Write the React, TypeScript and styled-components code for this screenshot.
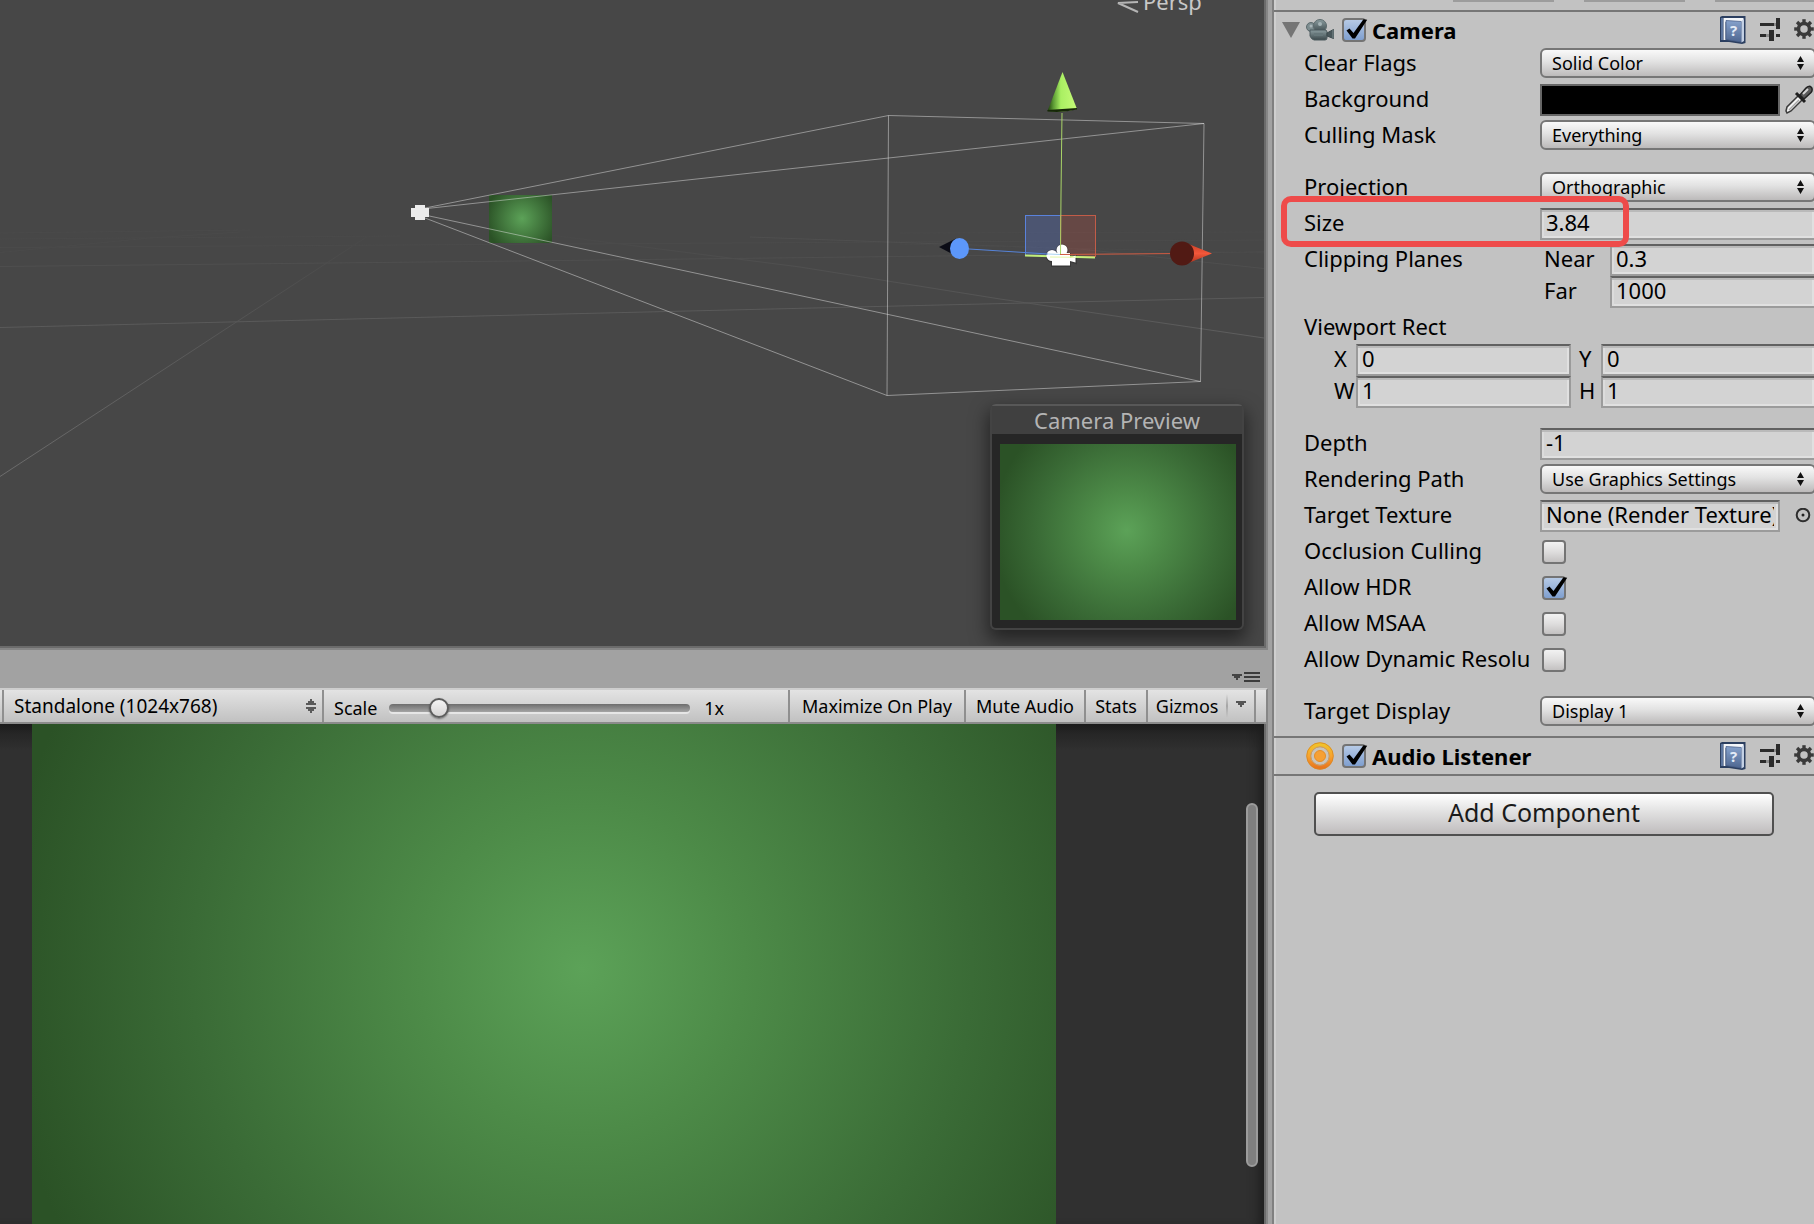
import React from "react";
import styled, { createGlobalStyle } from "styled-components";

const GlobalStyle = createGlobalStyle`
  *, *::before, *::after { box-sizing: border-box; }
  body {
    margin: 0;
    background: #a2a2a2;
    color: #000;
    font-family: "Noto Sans", "Open Sans", sans-serif;
    font-size: 22px;
  }
  button, input, select { font: inherit; color: inherit; margin: 0; }
`;

/* ---------- window frame ---------- */

const Editor = styled.main`
  display: grid;
  grid-template-columns: minmax(0, 1fr) 542px;
  column-gap: 4px;
  height: 100vh;
  min-height: 860px;
  overflow: hidden;
  background: #a2a2a2;
`;

const Workspace = styled.div`
  display: grid;
  grid-template-rows: minmax(0, 650fr) 38px 36px minmax(0, 500fr);
  min-width: 0;
  min-height: 0;
`;

/* ---------- scene view ---------- */

const ScenePane = styled.section`
  min-width: 0;
  display: flex;
  border-right: 2px solid #868686;
  border-bottom: 2px solid #868686;
`;

const SceneViewport = styled.div`
  position: relative;
  flex: 1;
  min-width: 0;
  overflow: hidden;
  background: #474747;
  border-right: 2px solid #6b6b6b;
  border-bottom: 2px solid #6b6b6b;
`;

const SceneCanvas = styled.svg`
  display: block;
  width: 100%;
  height: 100%;
`;

const greenGlow = (radius: string) =>
  `radial-gradient(circle ${radius} at 53.7% 49%, #5ca258, #4d8b48 28%, #3a6b36 67%, #2b5226)`;

const PreviewWindow = styled.figure`
  position: absolute;
  right: 20px;
  bottom: 16px;
  width: 254px;
  margin: 0;
  display: flex;
  flex-direction: column;
  border: 2px solid #434343;
  border-top-color: #585858;
  border-radius: 6px;
  background: #262626;
  box-shadow: 0 8px 18px 2px rgba(0, 0, 0, 0.5);
`;

const PreviewTitle = styled.figcaption`
  height: 28px;
  line-height: 28px;
  text-align: center;
  color: #b4b4b4;
  background: #404040;
`;

const PreviewImage = styled.div`
  height: 176px;
  margin: 10px 6px 8px 8px;
  background: ${greenGlow("134px")};
`;

/* ---------- game view ---------- */

const TabStrip = styled.div`
  display: flex;
  justify-content: flex-end;
  align-items: flex-end;
  padding: 0 8px 4px 0;
`;

const PlainButton = styled.button`
  display: flex;
  align-items: center;
  justify-content: center;
  padding: 0;
  border: 0;
  background: none;
  svg { display: block; }
`;

const Toolbar = styled.div`
  display: flex;
  min-width: 0;
  border-top: 2px solid #cdcdcd;
  border-bottom: 2px solid #8b8b8b;
  border-right: 2px solid #868686;
  background: linear-gradient(#e3e3e3, #c1c1c1);
  font-size: 18px;
`;

const ToolbarEdge = styled.div<{ $width: number; $divided?: boolean }>`
  flex: none;
  width: ${(p) => p.$width}px;
  ${(p) => p.$divided && "box-sizing: content-box; border-right: 2px solid #8f8f8f;"}
`;

const ToolbarButton = styled.button<{ $width: number }>`
  flex: none;
  display: flex;
  align-items: center;
  justify-content: space-evenly;
  width: ${(p) => p.$width}px;
  padding: 0;
  border: 0;
  border-right: 2px solid #8f8f8f;
  background: none;
  white-space: nowrap;
`;

const GizmoSplit = styled.span`
  width: 2px;
  height: 24px;
  background: linear-gradient(transparent, #a5a5a5, transparent);
`;

const SelectBox = styled.div<{ $toolbar?: boolean }>`
  position: relative;
  flex: ${(p) => (p.$toolbar ? "0 0 320px" : "1")};
  min-width: 0;
  height: ${(p) => (p.$toolbar ? "32px" : "30px")};
  ${(p) => p.$toolbar && "border-right: 2px solid #8f8f8f;"}
  svg {
    position: absolute;
    top: 0;
    bottom: 0;
    right: ${(p) => (p.$toolbar ? "6px" : "12px")};
    margin: auto 0;
    pointer-events: none;
  }
`;

const Popup = styled.select<{ $toolbar?: boolean }>`
  appearance: none;
  display: block;
  width: 100%;
  height: 100%;
  font-size: ${(p) => (p.$toolbar ? "19px" : "18px")};
  padding: 0 28px 0 10px;
  border: ${(p) => (p.$toolbar ? "0" : "2px solid #767676")};
  border-radius: ${(p) => (p.$toolbar ? "0" : "6px")};
  background: ${(p) => (p.$toolbar ? "none" : "linear-gradient(#f9f9f9, #e2e2e2 45%, #bcbaba)")};
`;

const ScaleGroup = styled.div`
  flex: 1;
  min-width: 0;
  display: flex;
  align-items: center;
  gap: 12px;
  padding: 3px 64px 0 10px;
  border-right: 2px solid #8f8f8f;
`;

const ScaleSlider = styled.input`
  appearance: none;
  flex: 1;
  min-width: 60px;
  height: 20px;
  background: none;
  &::-webkit-slider-runnable-track {
    height: 8px;
    border-radius: 4px;
    background: linear-gradient(#6d6d6d, #a4a4a4);
    box-shadow: 0 2px 0 #e6e6e6;
  }
  &::-webkit-slider-thumb {
    appearance: none;
    width: 20px;
    height: 20px;
    margin-top: -6px;
    border: 2px solid #5c5c5c;
    border-radius: 50%;
    background: linear-gradient(#f4f4f4, #d6d4d4);
    box-shadow: 0 1px 2px rgba(0, 0, 0, 0.45);
  }
`;

const ScaleValue = styled.output`
  margin-left: 2px;
`;

const GamePane = styled.section`
  min-width: 0;
  display: flex;
  border-right: 2px solid #868686;
`;

const GameViewport = styled.div`
  flex: 1;
  min-width: 0;
  display: flex;
  justify-content: space-between;
  padding: 0 6px 0 32px;
  overflow: hidden;
  border-right: 2px solid #6b6b6b;
  background: linear-gradient(#1c1c1c, #262626 10px, #303030 26px, #303030);
  box-shadow: inset -12px 0 12px -8px #1c1c1c;
`;

const GameImage = styled.div`
  flex: 0 1 1024px;
  background: ${greenGlow("582px")};
`;

const ScrollThumb = styled.div`
  flex: none;
  align-self: flex-start;
  width: 12px;
  height: 364px;
  margin-top: 79px;
  border: 2px solid #9c9c9c;
  border-radius: 6px;
  background: #808080;
`;

/* ---------- inspector ---------- */

const Inspector = styled.aside`
  min-width: 0;
  overflow: hidden;
  border-left: 2px solid #808080;
  background: #c2c2c2;
  box-shadow: inset 2px 0 #cfcfcf;
`;

const InspectorBody = styled.div`
  margin-right: -2px;
`;

const CutOffRow = styled.div`
  display: flex;
  justify-content: flex-end;
  gap: 30px;
  height: 10px;
`;

const CutOffField = styled.div`
  width: 101px;
  height: 2px;
  background: #9c9c9c;
`;

const ComponentHeader = styled.header`
  display: grid;
  grid-template-columns: 18px 30px 24px 1fr auto;
  column-gap: 6px;
  align-items: center;
  height: 38px;
  padding-left: 8px;
  border-top: 2px solid #767676;
`;

const ComponentTitle = styled.label`
  font-weight: 700;
  line-height: 30px;
`;

const HeaderActions = styled.div`
  display: flex;
  align-items: center;
  gap: 14px;
`;

const Properties = styled.div`
  padding: 0 0 8px 30px;
`;

const Row = styled.div<{ $tight?: boolean; $after?: boolean }>`
  position: relative;
  display: flex;
  height: 32px;
  margin-bottom: ${(p) => (p.$after ? "20px" : p.$tight ? "0" : "4px")};
  &:last-child { margin-bottom: 0; }
`;

const Label = styled.label<{ $width?: number }>`
  flex: 0 0 ${(p) => p.$width ?? 236}px;
  line-height: 28px;
  white-space: nowrap;
`;

const Spacer = styled.div<{ $width: number }>`
  flex: 0 0 ${(p) => p.$width}px;
`;

const ViewportRow = styled(Row)`
  gap: 8px;
  padding-left: 30px;
`;

const Pair = styled.div`
  flex: 1;
  display: flex;
  min-width: 0;
`;

const Field = styled.input`
  flex: 1;
  min-width: 0;
  width: 0;
  height: 32px;
  padding: 0 4px 4px;
  border: 2px solid #9b9b9b;
  border-top-color: #616161;
  border-radius: 0;
  background: #d3d3d3;
  box-shadow: inset 0 2px #bababa, inset 2px 0 #dcdcdc, inset -2px -2px #e0e0e0;
`;

const ColorSwatch = styled.input`
  appearance: none;
  flex: 1;
  min-width: 0;
  width: 0;
  height: 32px;
  padding: 0;
  border: 2px solid #666;
  background: #000;
  &::-webkit-color-swatch-wrapper { padding: 0; }
  &::-webkit-color-swatch { border: 0; }
`;

const RowIcon = styled(PlainButton)`
  flex: 0 0 36px;
`;

const CheckBox = styled.span<{ $inRow?: boolean }>`
  position: relative;
  display: block;
  width: 24px;
  height: 24px;
  margin: ${(p) => (p.$inRow ? "4px 0 0 2px" : "0")};
  svg {
    position: absolute;
    left: 0;
    top: 0;
    overflow: visible;
    pointer-events: none;
    visibility: hidden;
  }
  input:checked + svg { visibility: visible; }
`;

const CheckInput = styled.input`
  appearance: none;
  display: block;
  width: 24px;
  height: 24px;
  border: 2px solid #747474;
  border-radius: 4px;
  background: linear-gradient(#f2f2f2, #dedddd 50%, #c3c1c1);
  &:checked { background: linear-gradient(#b6cae6, #7f9fcf); }
`;

const RedOutline = styled.div`
  position: absolute;
  z-index: 1;
  left: -23px;
  top: -12px;
  width: 348px;
  height: 51px;
  border: 6px solid #ee4b4a;
  border-radius: 10px;
  pointer-events: none;
`;

const AddArea = styled.div`
  display: flex;
  padding: 16px 42px 0 40px;
  border-top: 2px solid #767676;
`;

const AddButton = styled.button`
  flex: 1;
  height: 44px;
  padding: 0 0 4px;
  font-size: 25px;
  line-height: 36px;
  color: #1a1a1a;
  border: 2px solid #505050;
  border-radius: 5px;
  background: linear-gradient(#fff, #e4e4e4 40%, #bfbcbd);
`;

/* ---------- drawings ---------- */

const CheckMark = () => (
  <svg width="26" height="24" viewBox="0 0 26 24" aria-hidden="true">
    <path d="M4.5 12.5 7.5 10.5 11.5 15 21.5 1.2 25.2 1.8 13 20.5 10.5 20.5Z" fill="#000" />
  </svg>
);

const UpDown = () => (
  <svg width="7" height="14" viewBox="0 0 7 14" aria-hidden="true">
    <path d="M3.5 0 7 6H0ZM0 8H7L3.5 14Z" fill="#111" />
  </svg>
);

const ToolbarUpDown = () => (
  <svg width="10" height="14" viewBox="0 0 10 14" aria-hidden="true">
    <path d="M4 0H6V2H8V4H10V6H0V4H2V2H4ZM0 8H10V10H8V12H6V14H4V12H2V10H0Z" fill="#5a5a5a" />
  </svg>
);

const SmallTriangle = () => (
  <svg width="10" height="10" viewBox="0 0 10 10" aria-hidden="true">
    <path d="M0 0H10V2H8V4H6V6H4V4H2V2H0Z" fill="#555" />
  </svg>
);

const PaneMenuIcon = () => (
  <svg width="28" height="12" viewBox="0 0 28 12" aria-hidden="true">
    <path d="M0 2H10V4H8V6H6V8H4V6H2V4H0Z" fill="#444" />
    <path d="M12 0H28V2H12ZM12 4H28V6H12ZM12 8H28V10H12Z" fill="#3c3c3c" />
  </svg>
);

const FoldTriangle = () => (
  <svg width="18" height="16" viewBox="0 0 18 16" aria-hidden="true">
    <path d="M0 0H18L9 16Z" fill="#757575" />
  </svg>
);

const CameraIcon = () => (
  <svg width="30" height="22" viewBox="0 0 30 22" aria-hidden="true">
    <defs>
      <linearGradient id="camMetal" x1="0" y1="0" x2="0" y2="1">
        <stop offset="0" stopColor="#8a9c9f" />
        <stop offset="1" stopColor="#3b484b" />
      </linearGradient>
    </defs>
    <circle cx="5" cy="8" r="4.500" fill="#7d8d90" stroke="#5c6a6d" />
    <circle cx="14" cy="7" r="6.500" fill="url(#camMetal)" stroke="#5c6a6d" />
    <circle cx="14" cy="5" r="2" fill="#a3b2b5" />
    <circle cx="5" cy="7" r="1.500" fill="#a8b5b8" />
    <path d="M4 11H19Q21 11 21 13V19Q21 21 19 21H8Q5 20 4 17Z" fill="url(#camMetal)" stroke="#4d5b5e" />
    <path d="M8 14H17V17H8Z" fill="#66777a" />
    <path d="M21 14 27.500 10.500V19.500L21 17Z" fill="#48565a" stroke="#3c4a4d" />
    <path d="M27 11V19" stroke="#7c8c8f" />
  </svg>
);

const AudioIcon = () => (
  <svg width="30" height="28" viewBox="0 0 30 28" aria-hidden="true">
    <defs>
      <linearGradient id="audioRing" x1="0" y1="0" x2="0" y2="1">
        <stop offset="0" stopColor="#f0c22c" />
        <stop offset="0.500" stopColor="#f8a42d" />
        <stop offset="1" stopColor="#e8761f" />
      </linearGradient>
    </defs>
    <circle cx="14" cy="14" r="11.500" fill="#c9c4bb" stroke="url(#audioRing)" strokeWidth="4" />
    <circle cx="14" cy="14" r="13.300" fill="none" stroke="#d8871f" strokeWidth="0.800" />
    <circle cx="14" cy="14" r="9.200" fill="none" stroke="#c58a45" strokeWidth="0.800" />
    <circle cx="14" cy="14" r="5.500" fill="#f6a034" stroke="#e68d25" />
  </svg>
);

const BookIcon = () => (
  <svg width="26" height="28" viewBox="0 0 26 28" aria-hidden="true">
    <defs>
      <linearGradient id="bookCover" x1="0" y1="0" x2="0" y2="1">
        <stop offset="0" stopColor="#86a2cc" />
        <stop offset="1" stopColor="#4e6690" />
      </linearGradient>
    </defs>
    <path d="M0 1 2 0H25.500V27L22 28 9 26H0Z" fill="#2c3f60" />
    <path d="M3.500 2H23.500V6H5.500V24H3.500Z" fill="#f3f6fa" />
    <path d="M1 2H3V24H1Z" fill="#5d769f" />
    <path d="M6 4.500 21.500 5.500V26L6 23.500Z" fill="url(#bookCover)" stroke="#4a618b" strokeWidth="0.800" />
    <path d="M21.500 5 24 3V25L21.500 26.500Z" fill="#c3d0e4" />
    <text x="13.500" y="20" textAnchor="middle" fontSize="15" fontWeight="700" fill="#e4ecf7">?</text>
  </svg>
);

const SlidersIcon = () => (
  <svg width="20" height="24" viewBox="0 0 20 24" aria-hidden="true">
    <path d="M0 5H14V8H0ZM16 0H20V11H16ZM0 16H6V19H0ZM9 12H14V23H9ZM16 16H20V19H16Z" fill="#2b2b2b" />
    <path d="M14 5H16V8H14ZM6 16H9V19H6Z" fill="#8c8c8c" />
  </svg>
);

const GearIcon = () => (
  <svg width="22" height="22" viewBox="0 0 22 22" aria-hidden="true">
    <g transform="translate(10 10)" fill="none" stroke="#3a3a3a">
      <circle r="5.500" strokeWidth="3.500" />
      {[0, 45, 90, 135, 180, 225, 270, 315].map((a) => (
        <path key={a} d="M0 -6V-9.800" strokeWidth="3.400" transform={`rotate(${a})`} />
      ))}
    </g>
  </svg>
);

const DropperIcon = () => (
  <svg width="30" height="32" viewBox="0 0 30 32" aria-hidden="true">
    <path d="M3 27 4 23 16 11 20 15 8 27 4 29Z" fill="#f1f1f1" stroke="#3a3a3a" strokeWidth="1.500" />
    <path d="M6 26 16 16" stroke="#a5a5a5" strokeWidth="1.500" />
    <path d="M13 9 22 18" stroke="#1f1f1f" strokeWidth="3" />
    <path d="M17 11 23 4Q26 1 28.500 3.500 30 6 28 8.500L21 15Z" fill="#5b5b5b" stroke="#222" strokeWidth="1.500" />
    <path d="M20 10 25 5" stroke="#d4d4d4" strokeWidth="2" />
  </svg>
);

const PickerIcon = () => (
  <svg width="26" height="16" viewBox="0 0 26 16" aria-hidden="true">
    <circle cx="18" cy="7" r="6.300" fill="none" stroke="#2e2e2e" strokeWidth="2" />
    <circle cx="18" cy="7" r="1.500" fill="#222" />
  </svg>
);

const SceneDrawing = () => (
  <SceneCanvas viewBox="0 0 1264 646" preserveAspectRatio="xMinYMin slice" role="img" aria-label="Scene">
    <defs>
      <radialGradient id="boxGlow" gradientUnits="userSpaceOnUse" cx="522" cy="218.500" r="36">
        <stop offset="0" stopColor="#5ca258" />
        <stop offset="1" stopColor="#2b5226" />
      </radialGradient>
      <linearGradient id="gridFade" gradientUnits="userSpaceOnUse" x1="0" y1="477" x2="368" y2="236">
        <stop offset="0" stopColor="#6c6c6c" />
        <stop offset="1" stopColor="#484848" />
      </linearGradient>
      <linearGradient id="gridFadeRight" gradientUnits="userSpaceOnUse" x1="550" y1="236" x2="1264" y2="338">
        <stop offset="0" stopColor="#484848" />
        <stop offset="1" stopColor="#5e5e5e" />
      </linearGradient>
      <linearGradient id="greenCone" x1="0" y1="0" x2="1" y2="0">
        <stop offset="0" stopColor="#1c3a0c" />
        <stop offset="0.200" stopColor="#5c9a35" />
        <stop offset="0.450" stopColor="#a9ef62" />
        <stop offset="1" stopColor="#c6fb78" />
      </linearGradient>
      <linearGradient id="redCone" x1="0" y1="0" x2="0" y2="1">
        <stop offset="0" stopColor="#c93f26" />
        <stop offset="0.500" stopColor="#f2573a" />
        <stop offset="1" stopColor="#a52f1a" />
      </linearGradient>
    </defs>

    <g fill="none" strokeWidth="1">
      <path d="M0 327.500 520 315 940 305 1264 297.500" stroke="#5a5a5a" />
      <path d="M0 266.500 520 261 940 256 1264 252" stroke="#4f4f4f" />
      <path d="M0 247.500 400 245 900 242 1264 240" stroke="#4b4b4b" />
      <path d="M0 233 250 230M0 239 400 236M0 252.500 150 238 240 232" stroke="#4a4a4a" />
      <path d="M0 476.500 368 236" stroke="url(#gridFade)" />
      <path d="M550 235 800 267 1000 299 1264 338" stroke="url(#gridFadeRight)" />
      <path d="M750 237 1080 249 1264 268.500" stroke="#4f4f4f" />
      <path d="M900 233 1264 232M900 244 1264 253" stroke="#4a4a4a" />
    </g>

    <rect x="489" y="195" width="63" height="48" fill="url(#boxGlow)" />

    <g fill="none" stroke="#e6e6e6" strokeOpacity="0.480" strokeWidth="1">
      <path d="M425 208 888.500 115.500 1204 123.500 1200.500 381.500 887 395.500 425 218" />
      <path d="M427 208.500 1204 123.500M427 215.500 1200.500 381.500M888.500 115.500 887 395.500" />
    </g>
    <path d="M411 208H415V205H425V208H429V217H425V220H415V217H411Z" fill="#ececec" />

    <rect x="1025.500" y="215.500" width="35" height="40" fill="#5b7ff0" fillOpacity="0.250" stroke="#5a82dc" />
    <rect x="1060.500" y="215.500" width="35" height="41" fill="#e85040" fillOpacity="0.200" stroke="#c25c48" />

    <g fill="#2a2a2a" stroke="#2a2a2a" strokeWidth="2" opacity="0.450">
      <circle cx="1052" cy="256" r="5.500" />
      <circle cx="1062" cy="250.500" r="5.500" />
      <path d="M1052 254H1070V258L1076 256V263L1070 261V266H1052Z" />
    </g>
    <path d="M1025 255.500 1095 257.500" stroke="#c2ee7b" strokeWidth="2" />
    <g fill="#fff">
      <circle cx="1052" cy="255.500" r="5.500" />
      <circle cx="1062" cy="250" r="5.500" />
      <path d="M1052 253H1070V258L1075.500 255.500V262.500L1070 261V265.500H1052Z" />
    </g>

    <path d="M1050 257 1075 257.300" stroke="#e4f7a9" />
    <path d="M1062 113 1061 194 1060.500 255" fill="none" stroke="#a9d468" />
    <path d="M969 249 1048 254" stroke="#5683d8" />
    <path d="M1048 254 1060 254.500" stroke="#a9d4f2" />
    <path d="M1060 254.500 1180 253.500" stroke="#cf5a41" />

    <path d="M1062.500 72 1077 109Q1063 113 1047.500 111Z" fill="url(#greenCone)" />
    <path d="M1047.500 110 1077 108V109.500Q1063 113 1047.500 111.500Z" fill="#162708" />
    <path d="M939 247 956 238.500V256Z" fill="#0b0c16" />
    <ellipse cx="959.500" cy="248.500" rx="9.500" ry="10.500" fill="#5c97fa" />
    <path d="M1186 243 1212 253.500 1186 264Z" fill="url(#redCone)" />
    <circle cx="1182" cy="253.500" r="12" fill="#511a14" />

    <path d="M1138 2 1118 3 1138 12" fill="none" stroke="#b5b5b5" strokeWidth="2" />
    <text x="1143" y="10" fontSize="22" fill="#c8c8c8">Persp</text>
  </SceneCanvas>
);

/* ---------- parts ---------- */

const Toggle = ({ id, checked, inRow }: { id: string; checked?: boolean; inRow?: boolean }) => (
  <CheckBox $inRow={inRow}>
    <CheckInput id={id} type="checkbox" defaultChecked={checked} />
    <CheckMark />
  </CheckBox>
);

const SelectRow = ({ id, label, value, after }: { id: string; label: string; value: string; after?: boolean }) => (
  <Row $after={after}>
    <Label htmlFor={id}>{label}</Label>
    <SelectBox>
      <Popup id={id} defaultValue={value}>
        <option>{value}</option>
      </Popup>
      <UpDown />
    </SelectBox>
  </Row>
);

const ToggleRow = ({ id, label, checked, after }: { id: string; label: string; checked?: boolean; after?: boolean }) => (
  <Row $after={after}>
    <Label htmlFor={id}>{label}</Label>
    <Toggle id={id} checked={checked} inRow />
  </Row>
);

const LabelledField = ({ id, label, value, width }: { id: string; label: string; value: string; width: number }) => (
  <Pair>
    <Label htmlFor={id} $width={width}>{label}</Label>
    <Field id={id} type="text" defaultValue={value} />
  </Pair>
);

const Actions = () => (
  <HeaderActions>
    <PlainButton type="button" aria-label="Help"><BookIcon /></PlainButton>
    <PlainButton type="button" aria-label="Presets"><SlidersIcon /></PlainButton>
    <PlainButton type="button" aria-label="Settings"><GearIcon /></PlainButton>
  </HeaderActions>
);

export default function App() {
  return (
    <>
      <GlobalStyle />
      <Editor>
        <Workspace>
          <ScenePane>
            <SceneViewport>
              <SceneDrawing />
              <PreviewWindow>
                <PreviewTitle>Camera Preview</PreviewTitle>
                <PreviewImage />
              </PreviewWindow>
            </SceneViewport>
          </ScenePane>

          <TabStrip>
            <PlainButton type="button" aria-label="Pane menu"><PaneMenuIcon /></PlainButton>
          </TabStrip>
          <Toolbar>
            <ToolbarEdge $width={2} $divided />
            <SelectBox $toolbar>
              <Popup $toolbar aria-label="Resolution" defaultValue="Standalone (1024x768)">
                <option>Standalone (1024x768)</option>
              </Popup>
              <ToolbarUpDown />
            </SelectBox>
            <ScaleGroup>
              <label htmlFor="scale">Scale</label>
              <ScaleSlider id="scale" type="range" min={0} max={100} defaultValue={14} />
              <ScaleValue htmlFor="scale">1x</ScaleValue>
            </ScaleGroup>
            <ToolbarButton type="button" $width={176}>Maximize On Play</ToolbarButton>
            <ToolbarButton type="button" $width={120}>Mute Audio</ToolbarButton>
            <ToolbarButton type="button" $width={62}>Stats</ToolbarButton>
            <ToolbarButton type="button" $width={108}>
              Gizmos
              <GizmoSplit />
              <SmallTriangle />
            </ToolbarButton>
            <ToolbarEdge $width={10} />
          </Toolbar>
          <GamePane>
            <GameViewport>
              <GameImage />
              <ScrollThumb />
            </GameViewport>
          </GamePane>
        </Workspace>

        <Inspector>
          <InspectorBody>
            <CutOffRow>
              <CutOffField />
              <CutOffField />
              <CutOffField />
            </CutOffRow>

            <ComponentHeader>
              <PlainButton type="button" aria-label="Fold"><FoldTriangle /></PlainButton>
              <CameraIcon />
              <Toggle id="camera" checked />
              <ComponentTitle htmlFor="camera">Camera</ComponentTitle>
              <Actions />
            </ComponentHeader>

            <Properties>
              <SelectRow id="clear-flags" label="Clear Flags" value="Solid Color" />
              <Row>
                <Label htmlFor="background">Background</Label>
                <ColorSwatch id="background" type="color" defaultValue="#000000" />
                <RowIcon type="button" aria-label="Pick colour"><DropperIcon /></RowIcon>
              </Row>
              <SelectRow id="culling-mask" label="Culling Mask" value="Everything" after />
              <SelectRow id="projection" label="Projection" value="Orthographic" />
              <Row>
                <Label htmlFor="size">Size</Label>
                <Field id="size" type="text" defaultValue="3.84" />
                <RedOutline />
              </Row>
              <Row $tight>
                <Label as="span" $width={240}>Clipping Planes</Label>
                <LabelledField id="near" label="Near" value="0.3" width={66} />
              </Row>
              <Row>
                <Spacer $width={240} />
                <LabelledField id="far" label="Far" value="1000" width={66} />
              </Row>
              <Row $tight>
                <Label as="span">Viewport Rect</Label>
              </Row>
              <ViewportRow $tight>
                <LabelledField id="vx" label="X" value="0" width={22} />
                <LabelledField id="vy" label="Y" value="0" width={22} />
              </ViewportRow>
              <ViewportRow $after>
                <LabelledField id="vw" label="W" value="1" width={22} />
                <LabelledField id="vh" label="H" value="1" width={22} />
              </ViewportRow>
              <Row>
                <Label htmlFor="depth">Depth</Label>
                <Field id="depth" type="text" defaultValue="-1" />
              </Row>
              <SelectRow id="rendering-path" label="Rendering Path" value="Use Graphics Settings" />
              <Row>
                <Label htmlFor="target-texture">Target Texture</Label>
                <Field id="target-texture" type="text" readOnly defaultValue="None (Render Texture)" />
                <RowIcon type="button" aria-label="Select texture"><PickerIcon /></RowIcon>
              </Row>
              <ToggleRow id="occlusion" label="Occlusion Culling" />
              <ToggleRow id="hdr" label="Allow HDR" checked />
              <ToggleRow id="msaa" label="Allow MSAA" />
              <ToggleRow id="dynamic" label="Allow Dynamic Resolu" after />
              <SelectRow id="target-display" label="Target Display" value="Display 1" />
            </Properties>

            <ComponentHeader>
              <span />
              <AudioIcon />
              <Toggle id="audio-listener" checked />
              <ComponentTitle htmlFor="audio-listener">Audio Listener</ComponentTitle>
              <Actions />
            </ComponentHeader>
            <AddArea>
              <AddButton type="button">Add Component</AddButton>
            </AddArea>
          </InspectorBody>
        </Inspector>
      </Editor>
    </>
  );
}
